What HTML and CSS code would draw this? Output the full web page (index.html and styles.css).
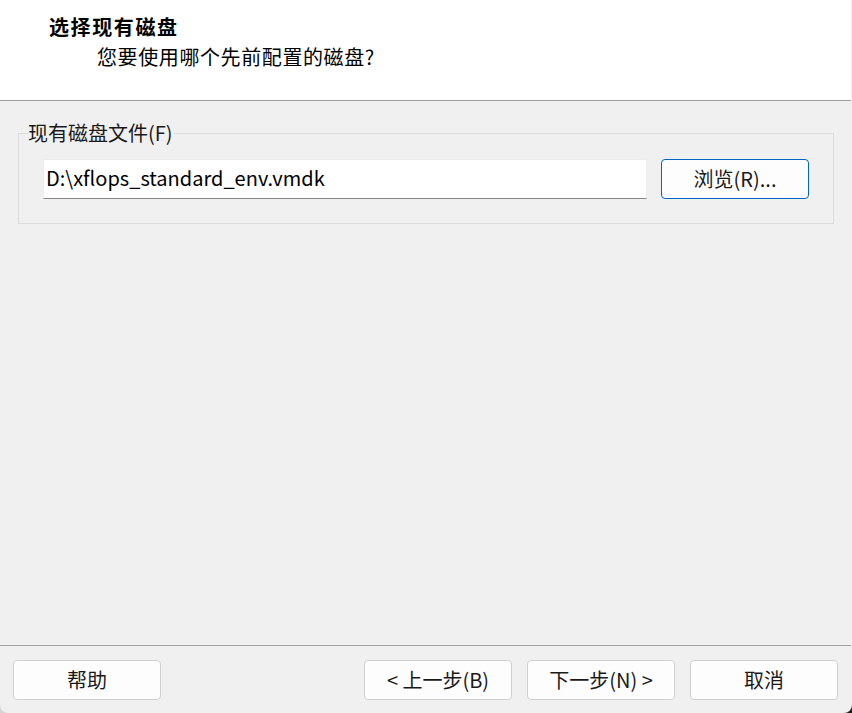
FILE: index.html
```html
<!DOCTYPE html>
<html lang="zh-CN">
<head>
<meta charset="utf-8">
<title>选择现有磁盘</title>
<link rel="stylesheet" href="styles.css">
</head>
<body>
<div class="window">
  <header class="header">
    <div class="title">选择现有磁盘</div>
    <div class="subtitle">您要使用哪个先前配置的磁盘?</div>
  </header>
  <main class="main">
    <fieldset class="group">
      <legend class="legend">现有磁盘文件(F)</legend>
      <div class="row">
        <div class="input">D:\xflops_standard_env.vmdk</div>
        <button class="btn btn-primary">浏览(R)...</button>
      </div>
    </fieldset>
  </main>
  <footer class="footer">
    <button class="btn">帮助</button>
    <div class="nav">
      <button class="btn">&lt; 上一步(B)</button>
      <button class="btn">下一步(N) &gt;</button>
      <button class="btn">取消</button>
    </div>
  </footer>
</div>
</body>
</html>
```
FILE: styles.css
```css
html {
  background: linear-gradient(to right, #d4d4d4 0%, #d4d4d4 50%, #1e1e1e 51%, #1e1e1e 100%);
}
body {
  margin: 0;
  font-family: "Noto Sans CJK SC", "Noto Sans", sans-serif;
  color: #1a1a1a;
}
.window {
  width: 852px;
  height: 713px;
  display: flex;
  flex-direction: column;
  background: #f0f0f0;
  border-radius: 0 0 8px 8px;
  overflow: hidden;
}
.header {
  flex-shrink: 0;
  background: #ffffff;
  height: 101px;
  box-sizing: border-box;
  padding-top: 13px;
  border-bottom: 1px solid #a0a0a0;
  margin-right: 1px;
}
.title {
  margin-left: 49px;
  font-size: 20px;
  font-weight: bold;
  letter-spacing: 1.6px;
  line-height: 28px;
  color: #000;
}
.subtitle {
  margin-left: 97px;
  margin-top: 2px;
  font-size: 20px;
  letter-spacing: 0.6px;
  line-height: 28px;
  color: #000;
}
.main {
  flex: 1;
  padding: 19px 18px 0 18px;
}
.group {
  margin: 0;
  width: 816px;
  box-sizing: border-box;
  border: 1px solid #dcdcdc;
  padding: 0 24px 24px 9px;
}
.legend {
  padding: 0 1px 0 0;
  font-size: 20px;
  line-height: 26px;
  color: #1a1a1a;
}
.row {
  display: flex;
  gap: 14px;
  margin-left: 15px;
  margin-top: 13px;
}
.input {
  flex-shrink: 0;
  width: 604px;
  height: 40px;
  box-sizing: border-box;
  background: #ffffff;
  border: 1px solid #ececec;
  border-bottom: 1px solid #868686;
  padding: 0 2px;
  font-size: 20px;
  line-height: 35px;
  color: #000;
}
.btn {
  flex-shrink: 0;
  width: 148px;
  height: 40px;
  box-sizing: border-box;
  background: #fdfdfd;
  border: 1px solid #d0d0d0;
  border-radius: 4px;
  font-family: "Noto Sans CJK SC", "Noto Sans", sans-serif;
  font-size: 20px;
  color: #1a1a1a;
  padding: 0;
  line-height: 36px;
}
.btn-primary {
  border-color: #0067c0;
}
.footer {
  flex-shrink: 0;
  border-top: 1px solid #a0a0a0;
  margin-right: 1px;
  padding: 14px 13px 13px 13px;
  display: flex;
}
.nav {
  margin-left: auto;
  display: flex;
  gap: 15px;
}
```
